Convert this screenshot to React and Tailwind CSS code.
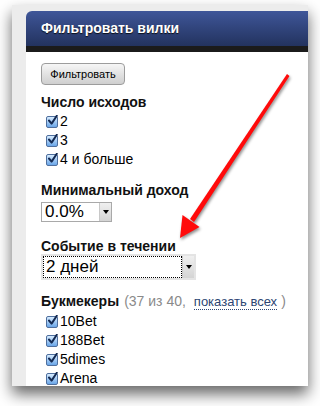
import React from 'react';

const font = { fontFamily: '"Liberation Sans", Arial, sans-serif' };

function Check() {
  return (
    <span className="relative flex h-[12px] w-[12px] shrink-0 items-center justify-center rounded-[2px] border border-[#4f6f9e] bg-gradient-to-b from-[#d7ecff] to-[#6aa6e8]">
      <svg width="11" height="11" viewBox="0 0 11 11" className="absolute -top-[2px] left-[0px]">
        <path d="M2 5.5 L4.6 8.6 L9.8 0.8" fill="none" stroke="#142a52" strokeWidth="2" strokeLinecap="round" strokeLinejoin="round" />
      </svg>
    </span>
  );
}

function Row({ label }) {
  return (
    <div className="flex h-[19px] items-center gap-[2px] pl-[5px] text-[14px] text-black">
      <Check />
      <span>{label}</span>
    </div>
  );
}

function SelectArrow({ h }) {
  return (
    <span className={`flex w-[12px] items-center justify-center border-l border-[#c8c8c8] bg-gradient-to-b from-[#f0f0f0] to-[#d4d4d4] ${h}`}>
      <span className="h-0 w-0 border-x-[3px] border-t-[4px] border-x-transparent border-t-black" />
    </span>
  );
}

export default function App() {
  return (
    <div className="relative h-[406px] w-[320px] overflow-hidden bg-white" style={font}>
      <div className="ml-[12px] mt-[5px] h-[381px] w-[296px] overflow-hidden bg-[#ececec] pl-[14px] pt-[6px] shadow-[0_8px_14px_rgba(0,0,0,0.6)]">
        <div className="flex h-[35px] items-center rounded-tl-[6px] bg-gradient-to-b from-[#3f5699] to-[#23335f] pl-[15px]">
          <span className="text-[14px] font-bold text-white [text-shadow:0_1px_1px_rgba(0,0,0,0.8)]">Фильтровать вилки</span>
        </div>
        <div className="h-[6px] bg-[#1b1b1b]" />
        <div className="h-full bg-white pl-[15px] pt-[11px]">
          <button className="flex h-[22px] w-[84px] items-center justify-center rounded-[4px] border border-[#9c9c9c] bg-gradient-to-b from-[#f6f6f6] to-[#cfcfcf] text-[11px] text-black">
            Фильтровать
          </button>

          <div className="mt-[9px] text-[14px] font-bold leading-[16px] text-[#111]">Число исходов</div>
          <div className="mt-[2px]">
            <Row label="2" />
            <Row label="3" />
            <Row label="4 и больше" />
          </div>

          <div className="mt-[13px] text-[14px] font-bold leading-[16px] text-[#111]">Минимальный доход</div>
          <div className="mt-[4px] flex h-[20px] w-[71px] items-stretch border border-[#a9a9a9] bg-white">
            <span className="flex-1 pl-[3px] text-[17px] leading-[18px] text-black">0.0%</span>
            <SelectArrow h="h-[18px]" />
          </div>

          <div className="mt-[16px] text-[14px] font-bold leading-[16px] text-[#111]">Событие в течении</div>
          <div className="flex h-[26px] w-[155px] items-stretch border-2 border-[#e4e4e4] bg-white">
            <span className="flex flex-1 items-center border border-dotted border-black pl-[2px] text-[17px] text-black">2 дней</span>
            <SelectArrow h="h-[22px]" />
          </div>

          <div className="mt-[13px] flex items-baseline text-[14px] leading-[16px]">
            <span className="font-bold text-[#111]">Букмекеры</span>
            <span className="ml-[5px] text-[#8a8a8a]">(37 из 40,</span>
            <span className="ml-[8px] border-b border-dotted border-[#2d4572] text-[13px] leading-[14px] text-[#2d4572]">показать всех</span>
            <span className="ml-[4px] text-[#8a8a8a]">)</span>
          </div>
          <div className="mt-[2px]">
            <Row label="10Bet" />
            <Row label="188Bet" />
            <Row label="5dimes" />
            <Row label="Arena" />
          </div>
        </div>
      </div>

      <svg className="pointer-events-none absolute left-0 top-0" width="320" height="406" viewBox="0 0 320 406">
        <g style={{ filter: 'drop-shadow(1px 2px 1.5px rgba(0,0,0,0.45))' }}>
          <polygon points="287,74 289.5,76 194,222 190,219" fill="#ff0a0a" />
          <polygon points="180,238 182.5,215 199.5,227" fill="#ff0a0a" />
        </g>
      </svg>
    </div>
  );
}
